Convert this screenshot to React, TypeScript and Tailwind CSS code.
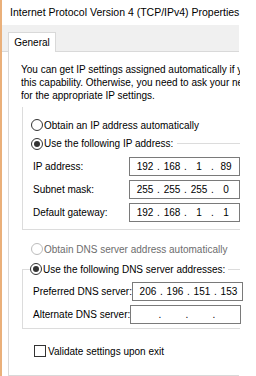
import React from "react";

const line = "bg-[#dcdcdc]";

function Radio({ checked = false, disabled = false }: { checked?: boolean; disabled?: boolean }) {
  return (
    <span
      className={`w-[12px] h-[12px] rounded-full border bg-white flex items-center justify-center shrink-0 ${
        disabled ? "border-[#bcbcbc]" : "border-[#333333]"
      }`}
    >
      {checked && <span className="w-[6px] h-[6px] rounded-full bg-[#333333]" />}
    </span>
  );
}

function IpBox({ parts }: { parts: string[] }) {
  return (
    <div className="w-[111px] h-[19px] border border-[#7a7a7a] bg-white flex items-center pl-[4px] shrink-0">
      {parts.map((p, i) => (
        <React.Fragment key={i}>
          {i > 0 && <span className="w-[5px] text-center">.</span>}
          <span className="w-[22px] text-center">{p}</span>
        </React.Fragment>
      ))}
    </div>
  );
}

function FieldRow({ label, parts }: { label: string; parts: string[] }) {
  return (
    <div className="h-[23px] flex items-center pl-[10px]">
      <span className="w-[100px] whitespace-nowrap">{label}</span>
      <IpBox parts={parts} />
    </div>
  );
}

export default function App() {
  return (
    <div className="w-[256px] h-[376px] bg-white overflow-hidden border-l-2 border-[#eab07a] flex flex-col text-[10px] leading-[13px] text-black font-['Liberation_Sans',Arial,sans-serif]">
      {/* title bar */}
      <div className="h-[25px] pl-[8px] flex items-center text-[10.5px] whitespace-nowrap">
        Internet Protocol Version 4 (TCP/IPv4) Properties
      </div>

      {/* tab strip */}
      <div className="h-[27px] w-[237px] bg-[#f0f0f0] border-b border-[#d9d9d9] flex items-end">
        <div className="ml-[6px] -mb-px h-[20px] w-[48px] bg-white border border-b-0 border-[#d9d9d9] flex items-center justify-center">
          General
        </div>
      </div>

      {/* tab page */}
      <div className="ml-[6px] w-[231px] h-[324px] border-l border-b border-[#d9d9d9] pl-[12px] pt-[11px] flex flex-col">
        <div className="w-[219px] overflow-hidden whitespace-nowrap">
          <div>You can get IP settings assigned automatically if your network supports</div>
          <div>this capability. Otherwise, you need to ask your network administrator</div>
          <div>for the appropriate IP settings.</div>
        </div>

        {/* IP group */}
        <div className="mt-[5px] ml-[1px] w-[218px] border-l border-b border-[#dcdcdc] pt-[9px] pb-[5px]">
          <div className="h-[18px] flex items-center pl-[8px] gap-[1px] whitespace-nowrap">
            <Radio />
            <span>Obtain an IP address automatically</span>
          </div>
          <div className="h-[19px] flex items-center pl-[8px] gap-[1px] whitespace-nowrap">
            <Radio checked />
            <span>Use the following IP address:</span>
            <span className={`flex-1 h-px ml-[3px] ${line}`} />
          </div>
          <div className="mt-[2px]">
            <FieldRow label="IP address:" parts={["192", "168", "1", "89"]} />
            <FieldRow label="Subnet mask:" parts={["255", "255", "255", "0"]} />
            <FieldRow label="Default gateway:" parts={["192", "168", "1", "1"]} />
          </div>
        </div>

        <div className="mt-[10px] ml-[10px] h-[18px] flex items-center gap-[1px] whitespace-nowrap text-[#6d6d6d]">
          <Radio disabled />
          <span>Obtain DNS server address automatically</span>
        </div>

        {/* DNS group */}
        <div className="mt-[2px] ml-[1px] w-[218px]">
          <div className="h-[18px] flex items-center whitespace-nowrap">
            <span className="self-end w-[8px] h-[9px] border-l border-t border-[#dcdcdc]" />
            <Radio checked />
            <span className="ml-[1px]">Use the following DNS server addresses:</span>
            <span className={`flex-1 h-px ml-[3px] ${line}`} />
          </div>
          <div className="border-l border-b border-[#dcdcdc] pt-[2px] pb-[2px]">
            <FieldRow label="Preferred DNS server:" parts={["206", "196", "151", "153"]} />
            <FieldRow label="Alternate DNS server:" parts={["", "", "", ""]} />
          </div>
        </div>

        <div className="mt-[13px] ml-[13px] h-[18px] flex items-center gap-[2px] whitespace-nowrap">
          <span className="w-[12px] h-[12px] border border-[#333333] bg-white shrink-0" />
          <span>Validate settings upon exit</span>
        </div>
      </div>
    </div>
  );
}
